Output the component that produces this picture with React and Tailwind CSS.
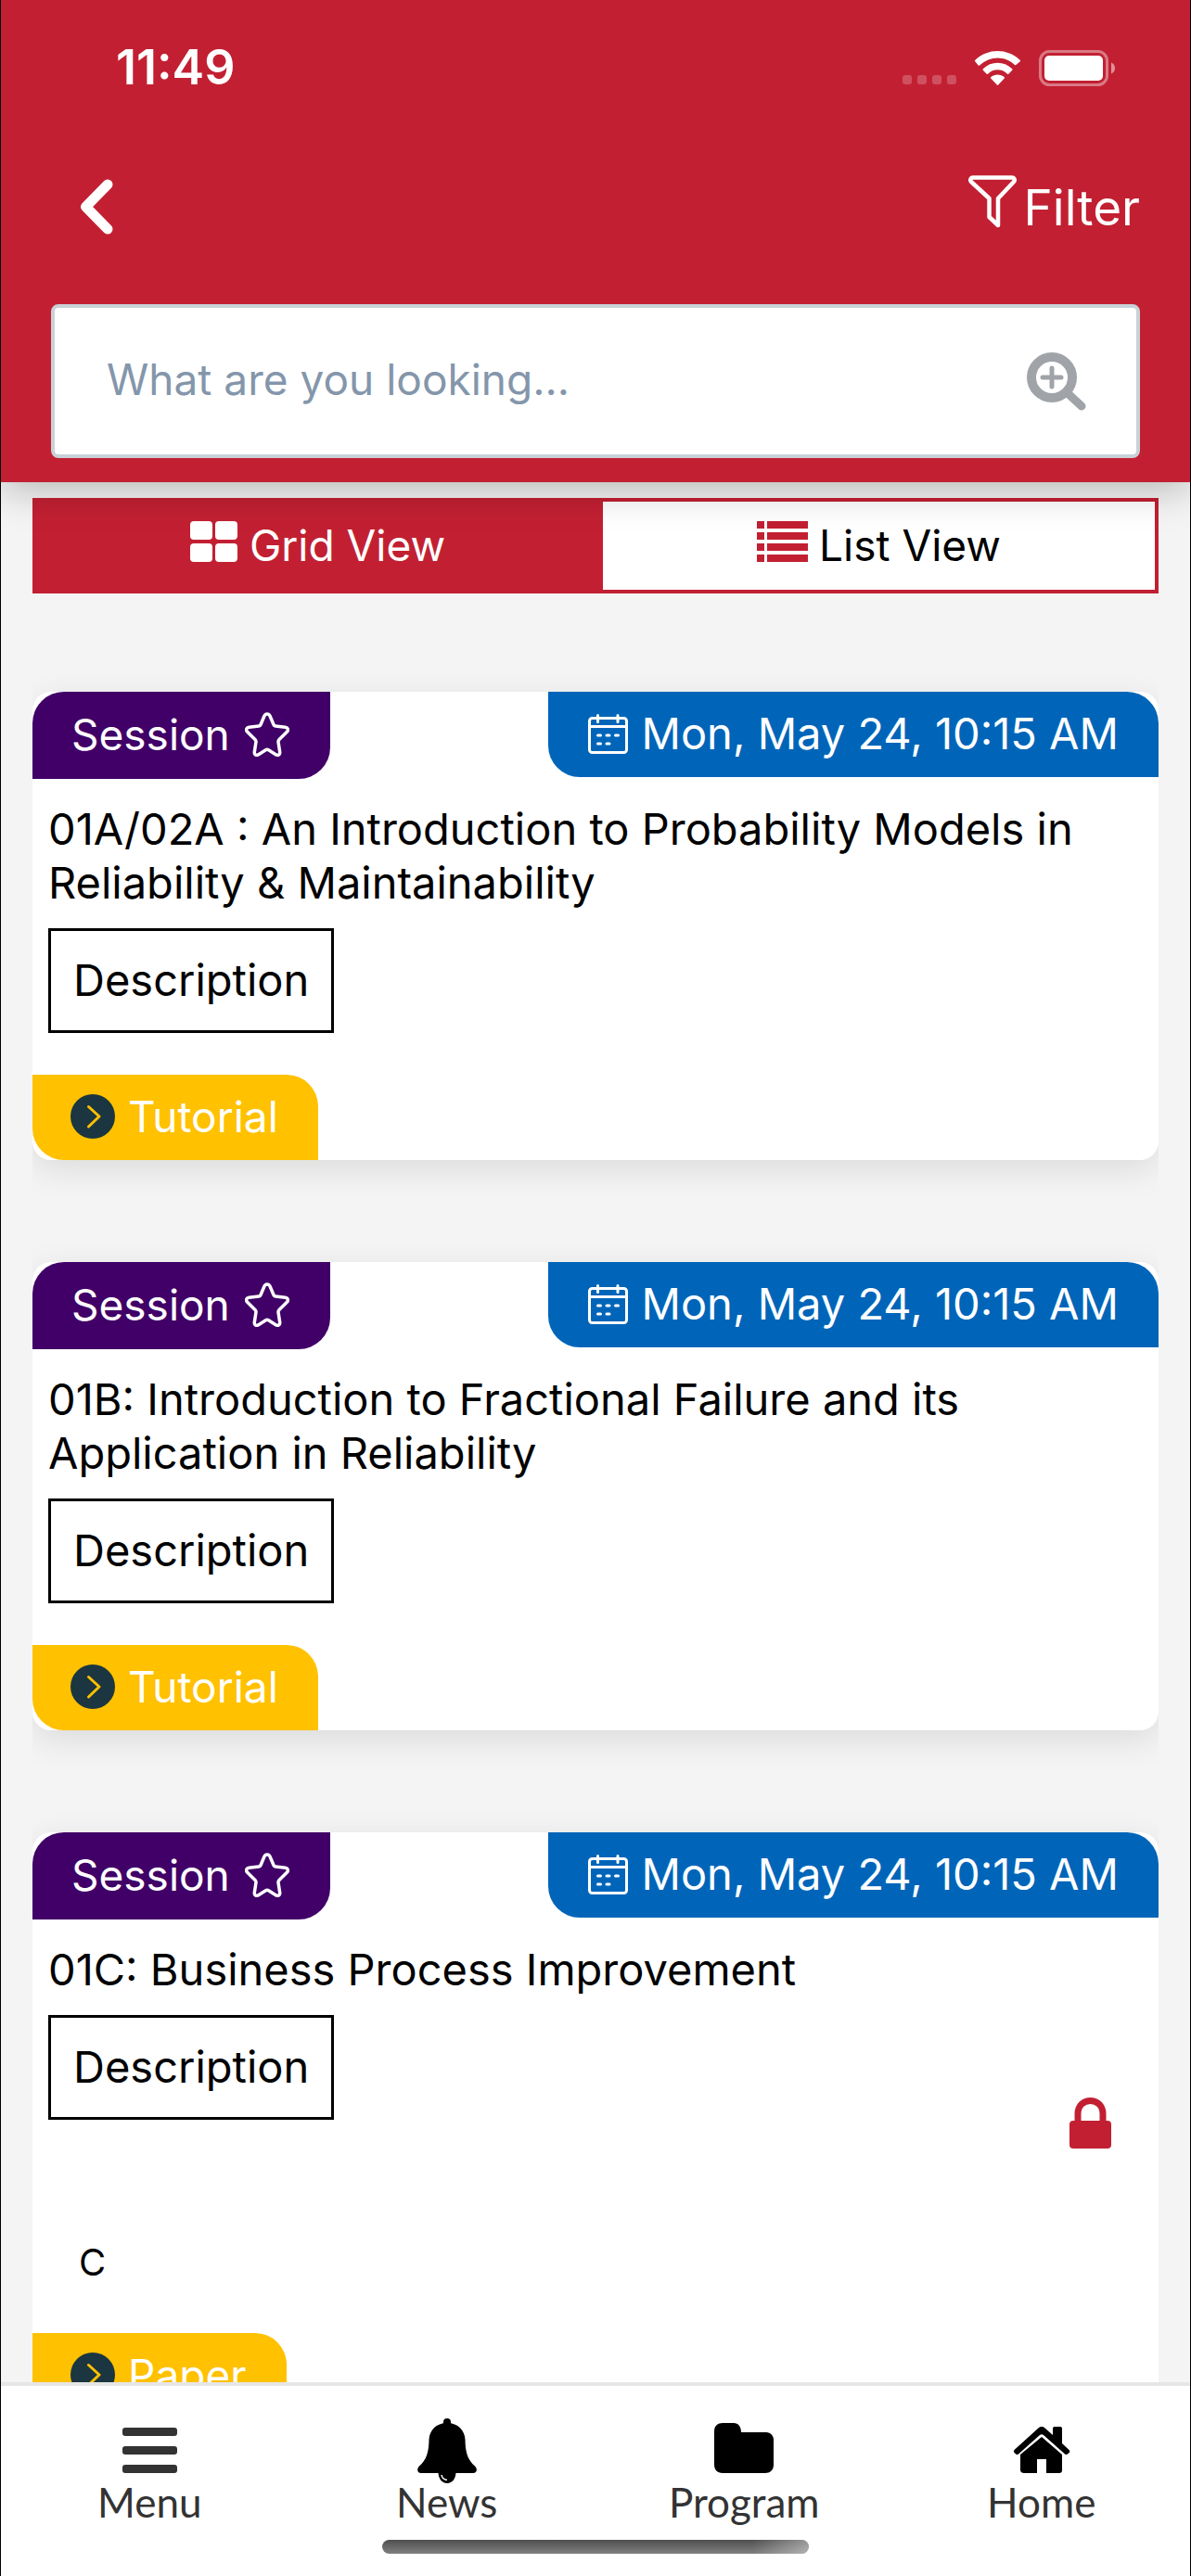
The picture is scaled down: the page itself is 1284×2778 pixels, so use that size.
function StatusIcons() {
  return (
    <div className="flex items-center gap-[19px]">
      <svg width="58" height="48" viewBox="0 0 58 48" fill="#fff" fillOpacity="0.22">
        <rect x="0" y="32" width="10" height="10" rx="3" />
        <rect x="16" y="32" width="10" height="10" rx="3" />
        <rect x="32" y="32" width="10" height="10" rx="3" />
        <rect x="48" y="32" width="10" height="10" rx="3" />
      </svg>
      <svg width="51" height="37" viewBox="0 0 51 37" fill="#fff">
        <path d="M25.500 7.400c7 0 13.500 2.700 18.400 7.500.4.400 1 .400 1.400 0l4.500-3.600c.4-.4.4-1 0-1.400C35.700-3.200 15.200-3.200 1.200 9.900c-.4.400-.4 1 0 1.400l3.500 4.200c.4.400 1 .400 1.400 0C12 10.100 18.500 7.400 25.500 7.400zM25.500 20.300c3.900 0 7.600 1.400 10.400 4.400.4.400 1 .400 1.400 0l3.900-4c.4-.4.4-1 0-1.400-8.600-8.600-22.800-8.600-31.400 0-.4.400-.4 1 0 1.400l3.900 4c.4.400 1 .400 1.400 0 2.800-3 6.500-4.400 10.400-4.400zM32.800 29.600c.4-.4.4-1.100 0-1.400-4.200-3.600-10.400-3.600-14.600 0-.4.400-.4 1 0 1.400l6.600 7c.4.400 1 .400 1.400 0z" />
      </svg>
      <svg width="82" height="39" viewBox="0 0 82 39" fill="none">
        <rect x="1.500" y="1.500" width="72" height="36" rx="10" stroke="#fff" strokeOpacity="0.4" strokeWidth="3" />
        <rect x="6" y="6" width="63" height="27" rx="5" fill="#fff" />
        <path d="M78 13.500v12c2.500-1 4-3.300 4-6s-1.500-5-4-6z" fill="#fff" fillOpacity="0.5" />
      </svg>
    </div>
  );
}

function BackIcon() {
  return (
    <svg width="36" height="60" viewBox="0 0 36 60" fill="none" stroke="#fff" strokeWidth="11" strokeLinecap="round" strokeLinejoin="round">
      <path d="M30 6 6.500 30 30 54" />
    </svg>
  );
}

function FunnelIcon() {
  return (
    <svg width="52" height="57" viewBox="0 0 52 57" fill="none" stroke="#fff" strokeWidth="4.500" strokeLinejoin="round">
      <path d="M5 2.500h42c2.500 0 3.500 3 2 4.500L32 25v29l-9.500-9V25L3 7C1.500 5.500 2.500 2.500 5 2.500z" />
    </svg>
  );
}

function SearchIcon() {
  return (
    <svg width="64" height="64" viewBox="0 0 64 64" fill="none" stroke="#a0a4a9" strokeLinecap="round">
      <circle cx="27" cy="28" r="22" strokeWidth="10" />
      <path d="M27 18v20M17 28h20" strokeWidth="5" />
      <path d="m45 46 14 13" strokeWidth="9" />
    </svg>
  );
}

function GridIcon() {
  return (
    <svg className="mb-2" width="52" height="44" viewBox="0 0 52 44" fill="#fff">
      <rect x="0" y="0" width="24" height="20" rx="4" />
      <rect x="27" y="0" width="24" height="20" rx="4" />
      <rect x="0" y="24" width="24" height="20" rx="4" />
      <rect x="27" y="24" width="24" height="20" rx="4" />
    </svg>
  );
}

function ListIcon() {
  return (
    <svg className="mb-2" width="55" height="44" viewBox="0 0 55 44" fill="#c22032">
      {[0, 12, 24, 36].map((y) => (
        <g key={y}>
          <rect x="0" y={y} width="8" height="8" />
          <rect x="11" y={y} width="44" height="8" />
        </g>
      ))}
    </svg>
  );
}

function StarIcon() {
  return (
    <svg width="48" height="48" viewBox="0 0 48 48" fill="none" stroke="#fff" strokeWidth="3.500" strokeLinejoin="round">
      <path d="M21 4c1.300-2.700 4.700-2.700 6 0l4 9.500c.4 1 1 1.400 2 1.500l10.500 1.200c3 .4 3.800 3 1.800 5L37 29.500c-.8.800-1.100 1.600-1 2.600l1.700 11c.3 2.600-1.700 4-4 2.800L25.500 40.800c-1-.6-2-.6-3 0L14.300 45.900c-2.300 1.200-4.300-.2-4-2.800l1.700-11c.1-1-.2-1.800-1-2.600L2.700 21.200c-2-2-1.200-4.600 1.800-5L15 15c1-.1 1.600-.5 2-1.500z" />
    </svg>
  );
}

function CalendarIcon() {
  return (
    <svg width="43" height="43" viewBox="0 0 43 43" fill="none" stroke="#fff" strokeWidth="3" strokeLinecap="round">
      <rect x="1.500" y="4.500" width="40" height="37" rx="3" />
      <path d="M1.500 13.500h40M10.500 1.500v7M32 1.500v7" />
      <path d="M10.500 23h3M20 23h3M29.500 23h3M10.500 32h3M20 32h3" />
    </svg>
  );
}

function CircleArrowIcon() {
  return (
    <svg width="48" height="48" viewBox="0 0 48 48" fill="none">
      <circle cx="24" cy="24" r="24" fill="#1b3640" />
      <path d="M19.500 13.500 31 24 19.500 35" stroke="#ffc100" strokeWidth="3" strokeLinecap="round" strokeLinejoin="round" />
    </svg>
  );
}

function LockIcon() {
  return (
    <svg className="mr-[51px] -mt-6 self-end" width="45" height="55" viewBox="0 0 45 55">
      <rect x="0" y="25" width="45" height="30" rx="4" fill="#c22032" />
      <path d="M9 27V17.500C9 9 15 3.500 22.500 3.500S36 9 36 17.500V27" fill="none" stroke="#c22032" strokeWidth="7" />
    </svg>
  );
}

function MenuIcon() {
  return (
    <svg width="59" height="49" viewBox="0 0 59 49" fill="#333">
      <rect y="0" width="59" height="9" rx="3" />
      <rect y="20" width="59" height="9" rx="3" />
      <rect y="40" width="59" height="9" rx="3" />
    </svg>
  );
}

function BellIcon() {
  return (
    <svg className="-mb-[11px]" width="64" height="70" viewBox="0 0 64 70">
      <rect x="28" y="0" width="8" height="12" rx="4" />
      <path d="M32 5c12 0 19 8 19.500 18 .2 13 2.500 22 11 29 2.500 3 1.500 7-2.500 7H4c-4 0-5-4-2.500-7 8.500-7 10.800-16 11-29C13 13 20 5 32 5z" />
      <path d="M22.500 58h19c0 7-4 12-9.500 12s-9.500-5-9.500-12z" />
      <path d="M26 61c.5 3.500 2.500 5 6 5.500" stroke="#fff" strokeWidth="1.500" fill="none" />
    </svg>
  );
}

function FolderIcon() {
  return (
    <svg width="64" height="54" viewBox="0 0 64 54">
      <path d="M9 0h12c5 0 8 4 8 10h27c5 0 8 4 8 8v27c0 6-4 9-9 9H9c-6 0-9-4-9-9V9c0-6 4-9 9-9z" />
    </svg>
  );
}

function HomeIcon() {
  return (
    <svg width="62" height="50" viewBox="0 0 62 50">
      <path d="M1.500 25 28 1c2-1.400 4-1.400 6 0l9 8V2c0-1.300.7-2 2-2h6c1.300 0 2 .7 2 2v16l7.500 7c1 1 1 2 .3 3l-2 1.500c-.8.800-1.800.800-2.800 0L33 9c-1.500-1-2.500-1-4 0L6 29.500c-1 .8-2 .8-2.800 0L1.500 28c-.8-1-.6-2 0-3z" />
      <path d="m31 11 22 19v17c0 2-1 3-3 3H36V35H26v15H12c-2 0-4-1-4-3V30z" />
    </svg>
  );
}

const sessions = [
  { title: "01A/02A : An Introduction to Probability Models in Reliability & Maintainability", tag: "Tutorial" },
  { title: "01B: Introduction to Fractional Failure and its Application in Reliability", tag: "Tutorial" },
  { title: "01C: Business Process Improvement", tag: "Paper", locked: true, note: "C" },
];

function SessionCard({ title, tag, locked, note }) {
  return (
    <article className="flex shrink-0 flex-col rounded-[20px] bg-white shadow-[0_10px_36px_rgba(0,0,0,0.1)]">
      <div className="flex items-start justify-between text-[46px]">
        <button className="flex h-[94px] items-center gap-4 rounded-tl-[34px] rounded-br-[34px] bg-[#400067] pr-11 pb-0.5 pl-[42px] text-white">
          Session
          <StarIcon />
        </button>
        <div className="flex h-[92px] items-center gap-[14px] rounded-tr-[34px] rounded-bl-[34px] bg-[#0065b9] px-[43px] pb-0.5 text-[47px] text-white">
          <CalendarIcon />
          <span>Mon, May 24, 10:15 AM</span>
        </div>
      </div>
      <h2 className="px-[17px] pt-[25px] leading-[58px] text-black">{title}</h2>
      <div className="px-[17px] pt-5">
        <button className="h-[113px] border-[3px] border-black px-6 text-black">Description</button>
      </div>
      {locked && <LockIcon />}
      {note && <p className="px-[50px] pt-[94px] text-[40px] leading-[58px] text-black">{note}</p>}
      <div className={note ? "flex pt-[47px]" : "flex pt-[45px]"}>
        <a href="#tag" className="flex h-[92px] items-center gap-[14px] rounded-tr-[34px] rounded-bl-[34px] bg-[#ffc100] pr-[43px] pb-0.5 pl-[41px] text-[46px] text-white">
          <CircleArrowIcon />
          {tag}
        </a>
      </div>
    </article>
  );
}

function NavItem({ label, icon }) {
  return (
    <a href={"#" + label.toLowerCase()} className="flex flex-col items-center justify-end gap-[6px]">
      {icon}
      <span className="leading-[50px]">{label}</span>
    </a>
  );
}

export default function App() {
  return (
    <div className="flex h-screen flex-col border-x border-black bg-[#f4f4f4] font-['Inter',sans-serif] text-[47px]">
      <header className="z-10 bg-[#c22032] px-[54px] pb-[26px] shadow-[0_8px_40px_rgba(0,0,0,0.25)]">
        <div className="flex h-[146px] items-center justify-between pr-[27px] pl-[70px] text-[52px] font-semibold text-white">
          <span>11:49</span>
          <StatusIcons />
        </div>
        <div className="flex h-[182px] items-start justify-between pt-[43px] text-white">
          <button aria-label="Back" className="pt-1 pl-[31px]">
            <BackIcon />
          </button>
          <button className="flex items-start gap-2 text-[53px] leading-[70px]">
            <FunnelIcon />
            Filter
          </button>
        </div>
        <label className="flex h-[166px] items-center rounded-lg border-4 border-[#c9d1d8] bg-white pr-[54px] pl-[56px] text-[46px]">
          <input aria-label="Search" placeholder="What are you looking..." className="min-w-0 flex-1 pb-1 outline-none placeholder:text-[#8496ab]" />
          <SearchIcon />
        </label>
      </header>
      <main className="min-h-0 flex-1 overflow-hidden px-[34px] pt-[17px]">
        <div className="flex h-[103px] border-4 border-[#c22032] text-[46px] leading-[60px]">
          <button className="flex flex-auto items-center justify-center gap-3 bg-[#c22032] pr-1 pb-0.5 text-white">
            <GridIcon />
            Grid View
          </button>
          <button className="flex flex-auto items-center justify-center gap-3 bg-white pb-0.5 text-black">
            <ListIcon />
            List View
          </button>
        </div>
        <div className="flex flex-col gap-[110px] overflow-hidden pt-[106px]">
          {sessions.map((s) => (
            <SessionCard key={s.title} {...s} />
          ))}
        </div>
      </main>
      <nav className="z-10 border-t-4 border-[#e6e6e6] bg-white font-['Lato',sans-serif] text-[44px] text-[#333]">
        <div className="grid h-[150px] grid-cols-4">
          <NavItem label="Menu" icon={<MenuIcon />} />
          <NavItem label="News" icon={<BellIcon />} />
          <NavItem label="Program" icon={<FolderIcon />} />
          <NavItem label="Home" icon={<HomeIcon />} />
        </div>
        <div className="flex h-[55px] items-center justify-center pb-2">
          <div className="h-[15px] w-[460px] overflow-hidden rounded-full bg-linear-to-b from-[#505050] to-[#808080]">
            <div className="ml-auto h-full w-[60px] bg-linear-to-r from-transparent to-white/40" />
          </div>
        </div>
      </nav>
    </div>
  );
}
